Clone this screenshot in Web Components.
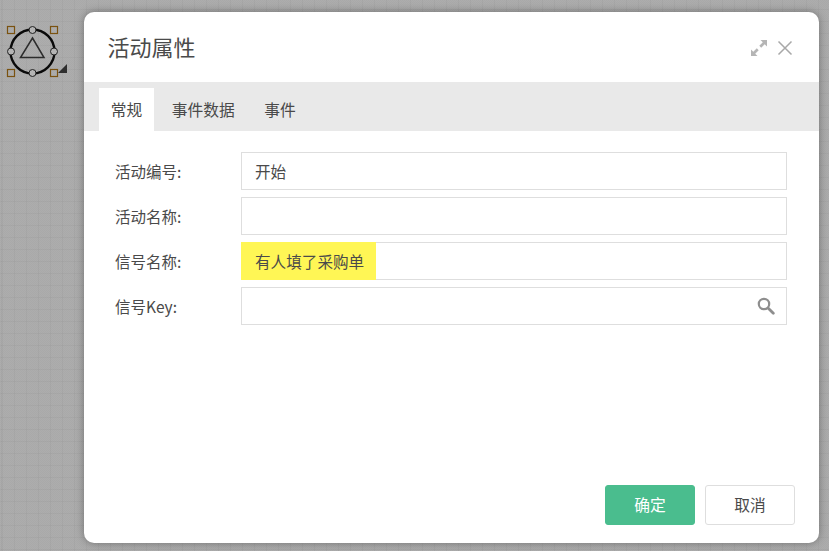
<!DOCTYPE html>
<html lang="zh">
<head>
<meta charset="utf-8">
<title>活动属性</title>
<style>
html, body { margin: 0; height: 100%; overflow: hidden; }
body { font-family: "Noto Sans CJK SC", "Liberation Sans", sans-serif; color: #4a4a4a; }
</style>
</head>
<body>
<flow-canvas>
  <start-node></start-node>
  <prop-dialog heading="活动属性">
    <tab-bar slot="tabs">
      <tab-item active>常规</tab-item>
      <tab-item>事件数据</tab-item>
      <tab-item>事件</tab-item>
    </tab-bar>
    <form-row label="活动编号:">开始</form-row>
    <form-row label="活动名称:"></form-row>
    <form-row label="信号名称:" highlight>有人填了采购单</form-row>
    <form-row label="信号Key:" search></form-row>
    <dialog-button slot="footer" primary>确定</dialog-button>
    <dialog-button slot="footer">取消</dialog-button>
  </prop-dialog>
</flow-canvas>

<script>
class FlowCanvas extends HTMLElement {
    constructor() {
        super();
        this.attachShadow({mode: "open"}).innerHTML = `
        <style>
            :host {
                display: block;
                position: relative;
                width: 829px;
                height: 551px;
                overflow: hidden;
                background-color: #ababab;
                background-image:
                    repeating-linear-gradient(to right, rgba(0,0,0,0.03) 0 1px, transparent 1px 12px),
                    repeating-linear-gradient(to bottom, rgba(0,0,0,0.03) 0 1px, transparent 1px 12px),
                    conic-gradient(#adadad 25%, #a9a9a9 0 50%, #adadad 0 75%, #a9a9a9 0);
                background-size: auto, auto, 2px 2px;
                background-position: 2px 0, 0 9px, 0 0;
            }
        </style>
        <slot></slot>`;
    }
}

class StartNode extends HTMLElement {
    constructor() {
        super();
        this.attachShadow({mode: "open"}).innerHTML = `
        <style>
            :host { display: block; position: absolute; left: 0; top: 20px; width: 72px; height: 60px; }
            svg { display: block; }
        </style>
        <svg width="72" height="60" viewBox="0 0 72 60">
            <circle cx="32.5" cy="31.5" r="22" fill="none" stroke="#0a0a0a" stroke-width="2.4"/>
            <path d="M32.5 18 L44 37.5 L20.5 37.5 Z" fill="none" stroke="#2c2c2c" stroke-width="1.5"/>
            <g fill="none" stroke="#7a5210" stroke-width="1.2">
                <rect x="7.5" y="6.5" width="7" height="7"/>
                <rect x="50.5" y="6.5" width="7" height="7"/>
                <rect x="7.5" y="49.5" width="7" height="7"/>
                <rect x="50.5" y="49.5" width="7" height="7"/>
            </g>
            <g fill="#b4b4b4" stroke="#222" stroke-width="1">
                <circle cx="32.5" cy="10" r="3.5"/>
                <circle cx="11" cy="31.5" r="3.5"/>
                <circle cx="54" cy="31.5" r="3.5"/>
                <circle cx="32.5" cy="53" r="3.5"/>
            </g>
            <path d="M58 53 L67 44 L67 53 Z" fill="#2e2e2e"/>
        </svg>`;
    }
}

class PropDialog extends HTMLElement {
    constructor() {
        super();
        this.attachShadow({mode: "open"}).innerHTML = `
        <style>
            :host {
                display: flex;
                flex-direction: column;
                position: absolute;
                left: 84px;
                top: 12px;
                width: 735px;
                height: 531px;
                background: #fff;
                border-radius: 10px;
                box-shadow: 0 0 8px rgba(0,0,0,0.35);
            }
            header {
                height: 70px;
                display: flex;
                align-items: center;
                padding: 0 26px 0 23.5px;
                flex: none;
            }
            h1 {
                flex: 1;
                margin: -3px 0 0;
                font-size: 22px;
                font-weight: 400;
                color: #4a4a4a;
            }
            .icons { display: flex; gap: 9px; align-items: center; margin-top: 1px; }
            svg { display: block; }
            main {
                flex: 1;
                display: flex;
                flex-direction: column;
                gap: 7px;
                padding: 21px 32px 0 31px;
            }
            footer {
                flex: none;
                display: flex;
                justify-content: flex-end;
                gap: 10px;
                padding: 0 24px 18px 0;
            }
        </style>
        <header>
            <h1></h1>
            <div class="icons">
                <svg width="18" height="18" viewBox="0 0 18 18">
                    <path d="M10.5 1 H17 V7.5 L14.7 5.2 L11.2 8.7 L9.3 6.8 L12.8 3.3 Z" fill="#b5b5b5"/>
                    <path d="M7.5 17 H1 V10.5 L3.3 12.8 L6.8 9.3 L8.7 11.2 L5.2 14.7 Z" fill="#b5b5b5"/>
                </svg>
                <svg width="16" height="16" viewBox="0 0 16 16">
                    <path d="M1.5 1.5 L14.5 14.5 M14.5 1.5 L1.5 14.5" stroke="#a8a8a8" stroke-width="1.5" fill="none"/>
                </svg>
            </div>
        </header>
        <slot name="tabs"></slot>
        <main><slot></slot></main>
        <footer><slot name="footer"></slot></footer>`;
        this.shadowRoot.querySelector("h1").textContent = this.getAttribute("heading");
    }
}

class TabBar extends HTMLElement {
    constructor() {
        super();
        this.attachShadow({mode: "open"}).innerHTML = `
        <style>
            :host {
                display: flex;
                flex: none;
                align-items: flex-end;
                height: 49px;
                padding-left: 15px;
                background: #e9e9e9;
            }
        </style>
        <slot></slot>`;
    }
}

class TabItem extends HTMLElement {
    constructor() {
        super();
        this.attachShadow({mode: "open"}).innerHTML = `
        <style>
            :host {
                display: block;
                height: 43px;
                line-height: 43px;
                padding: 0 11.75px;
                margin-right: 6px;
                font-size: 15.75px;
                color: #4a4a4a;
            }
            :host([active]) { background: #fff; }
        </style>
        <slot></slot>`;
    }
}

class FormRow extends HTMLElement {
    constructor() {
        super();
        this.attachShadow({mode: "open"}).innerHTML = `
        <style>
            :host {
                display: grid;
                grid-template-columns: 126px 546px;
                align-items: center;
                height: 38px;
                font-size: 15.5px;
                color: #4a4a4a;
            }
            .field {
                position: relative;
                box-sizing: border-box;
                height: 38px;
                display: flex;
                border: 1px solid #dedede;
            }
            .value {
                font-size: 15.6px;
                line-height: 38px;
                height: 38px;
                margin: -1px 0 0 -1px;
                padding: 0 12px 0 14px;
            }
            :host([highlight]) .value { background: #fff655; }
            svg { display: none; position: absolute; right: 11px; top: 9px; }
            :host([search]) svg { display: block; }
        </style>
        <span class="label"></span>
        <div class="field">
            <div class="value"><slot></slot></div>
            <svg width="18" height="18" viewBox="0 0 18 18">
                <circle cx="7" cy="7" r="5.2" fill="none" stroke="#8e8e8e" stroke-width="2.2"/>
                <path d="M11 11 L16.3 16.3" stroke="#8e8e8e" stroke-width="2.8" stroke-linecap="round"/>
            </svg>
        </div>`;
        this.shadowRoot.querySelector(".label").textContent = this.getAttribute("label");
    }
}

class DialogButton extends HTMLElement {
    constructor() {
        super();
        this.attachShadow({mode: "open"}).innerHTML = `
        <style>
            :host {
                display: block;
                box-sizing: border-box;
                width: 90px;
                height: 40px;
                line-height: 38px;
                text-align: center;
                font-size: 15.75px;
                border: 1px solid #dedede;
                border-radius: 3px;
                background: #fff;
                color: #4a4a4a;
            }
            :host([primary]) {
                background: #4abd8e;
                border-color: #4abd8e;
                color: #fff;
            }
        </style>
        <slot></slot>`;
    }
}

customElements.define("flow-canvas", FlowCanvas);
customElements.define("start-node", StartNode);
customElements.define("prop-dialog", PropDialog);
customElements.define("tab-bar", TabBar);
customElements.define("tab-item", TabItem);
customElements.define("form-row", FormRow);
customElements.define("dialog-button", DialogButton);
</script>
</body>
</html>
